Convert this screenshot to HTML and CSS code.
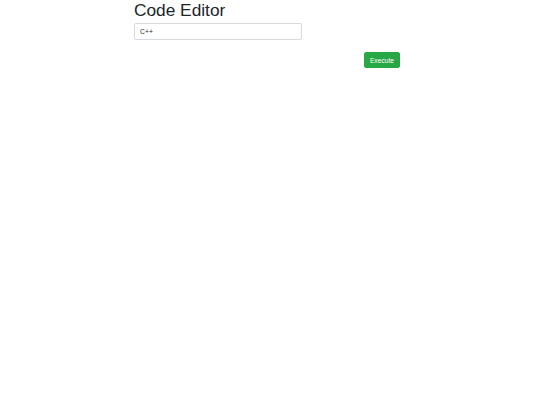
FILE: index.html
```html
<!DOCTYPE html>
<html>
<head>
<meta charset="utf-8">
<link rel="stylesheet" href="styles.css">
</head>
<body>
<div class="container">
  <h1 class="title">Code Editor</h1>
  <div class="select">C++</div>
  <div class="actions">
    <button class="btn">Execute</button>
  </div>
</div>
</body>
</html>
```
FILE: styles.css
```css
html, body { margin: 0; padding: 0; background: #fff; }
body { font-family: "Liberation Sans", Arial, sans-serif; color: #212529; }
.container { width: 266px; margin-left: 134px; display: flex; flex-direction: column; }
.title { font-size: 17.3px; font-weight: 400; margin: 0; line-height: 20px; height: 23px; }
.select { width: 168px; height: 17px; box-sizing: border-box; border: 1px solid #d7dbdf; border-radius: 2px; font-size: 6.8px; line-height: 15px; padding-left: 5px; color: #2a2a2a; }
.actions { display: flex; justify-content: flex-end; margin-top: 12px; }
.btn { background: #28a745; border: 1px solid #28a745; color: #fff; font-family: "Liberation Sans", Arial, sans-serif; font-size: 6.7px; height: 16px; width: 36px; padding: 0; border-radius: 2px; }
```
